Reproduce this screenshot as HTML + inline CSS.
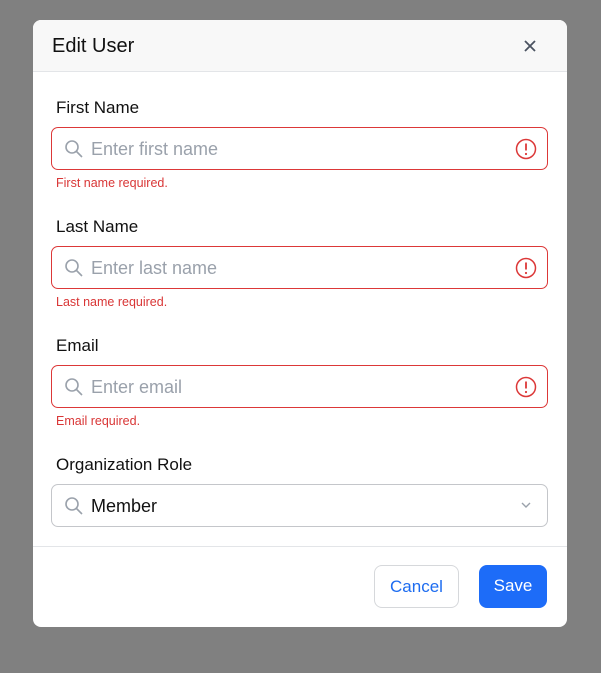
<!DOCTYPE html>
<html><head><style>
*{box-sizing:border-box;margin:0;padding:0}
body{width:601px;height:673px;background:#808080;font-family:"Liberation Sans",sans-serif;position:relative;overflow:hidden}
.modal{position:absolute;left:33px;top:20px;width:534px;height:607px;background:#fff;border-radius:8px;overflow:hidden}
.hdr{height:52px;background:#f8f8f8;border-bottom:1px solid #e3e5e8;position:relative}
.hdr h1{position:absolute;left:19px;top:15px;font-size:20px;font-weight:normal;color:#111}
.x{position:absolute;left:490px;top:19px}
.lbl{position:absolute;left:23px;font-size:17px;color:#111}
.inp{position:absolute;left:18px;width:497px;height:43px;border:1px solid #dc3838;border-radius:7px}
.inp.n{border-color:#c4c6ca}
.inp .ph{position:absolute;left:39px;top:11px;font-size:18px;color:#9aa1ab}
.inp.n .ph{color:#111}
.inp svg.s{position:absolute;left:12px;top:11px}
.inp svg.e{position:absolute;right:10px;top:10px}
.err{position:absolute;left:23px;font-size:12.5px;color:#d93636}
.foot{position:absolute;left:0;top:526px;width:100%;border-top:1px solid #e3e5e8}
.btn{position:absolute;top:545px;height:43px;border-radius:8px;font-size:17px;text-align:center;line-height:42px}
</style></head><body>
<div class="modal">
<div class="hdr"><h1>Edit User</h1>
<svg class="x" width="14" height="14" viewBox="0 0 14 14"><path d="M2 2L12 12M12 2L2 12" stroke="#4a5260" stroke-width="1.8"/></svg></div>

<div class="lbl" style="top:78px">First Name</div>
<div class="inp" style="top:107px"><svg class="s" width="20" height="20" viewBox="0 0 20 20"><circle cx="8" cy="8" r="6" fill="none" stroke="#9aa1ab" stroke-width="1.6"/><path d="M12.5 12.5L18 18" stroke="#9aa1ab" stroke-width="1.6"/></svg><span class="ph">Enter first name</span><svg class="e" width="22" height="22" viewBox="0 0 22 22"><circle cx="11" cy="11" r="9.5" fill="none" stroke="#dc3838" stroke-width="1.5"/><path d="M11 5.5V12.5" stroke="#dc3838" stroke-width="1.8"/><circle cx="11" cy="16" r="1.1" fill="#dc3838"/></svg></div>
<div class="err" style="top:156px">First name required.</div>

<div class="lbl" style="top:197px">Last Name</div>
<div class="inp" style="top:226px"><svg class="s" width="20" height="20" viewBox="0 0 20 20"><circle cx="8" cy="8" r="6" fill="none" stroke="#9aa1ab" stroke-width="1.6"/><path d="M12.5 12.5L18 18" stroke="#9aa1ab" stroke-width="1.6"/></svg><span class="ph">Enter last name</span><svg class="e" width="22" height="22" viewBox="0 0 22 22"><circle cx="11" cy="11" r="9.5" fill="none" stroke="#dc3838" stroke-width="1.5"/><path d="M11 5.5V12.5" stroke="#dc3838" stroke-width="1.8"/><circle cx="11" cy="16" r="1.1" fill="#dc3838"/></svg></div>
<div class="err" style="top:275px">Last name required.</div>

<div class="lbl" style="top:316px">Email</div>
<div class="inp" style="top:345px"><svg class="s" width="20" height="20" viewBox="0 0 20 20"><circle cx="8" cy="8" r="6" fill="none" stroke="#9aa1ab" stroke-width="1.6"/><path d="M12.5 12.5L18 18" stroke="#9aa1ab" stroke-width="1.6"/></svg><span class="ph">Enter email</span><svg class="e" width="22" height="22" viewBox="0 0 22 22"><circle cx="11" cy="11" r="9.5" fill="none" stroke="#dc3838" stroke-width="1.5"/><path d="M11 5.5V12.5" stroke="#dc3838" stroke-width="1.8"/><circle cx="11" cy="16" r="1.1" fill="#dc3838"/></svg></div>
<div class="err" style="top:394px">Email required.</div>

<div class="lbl" style="top:435px">Organization Role</div>
<div class="inp n" style="top:464px"><svg class="s" width="20" height="20" viewBox="0 0 20 20"><circle cx="8" cy="8" r="6" fill="none" stroke="#9aa1ab" stroke-width="1.6"/><path d="M12.5 12.5L18 18" stroke="#9aa1ab" stroke-width="1.6"/></svg><span class="ph">Member</span><svg style="position:absolute;right:16px;top:17px" width="10" height="7" viewBox="0 0 10 7"><path d="M1 1L5 5L9 1" fill="none" stroke="#9aa1ab" stroke-width="1.4"/></svg></div>

<div class="foot"></div>
<div class="btn" style="left:341px;width:85px;border:1px solid #d6d8db;color:#1d6cf0;background:#fff">Cancel</div>
<div class="btn" style="left:446px;width:68px;background:#1d6cf8;color:#fff">Save</div>
</div>
</body></html>
